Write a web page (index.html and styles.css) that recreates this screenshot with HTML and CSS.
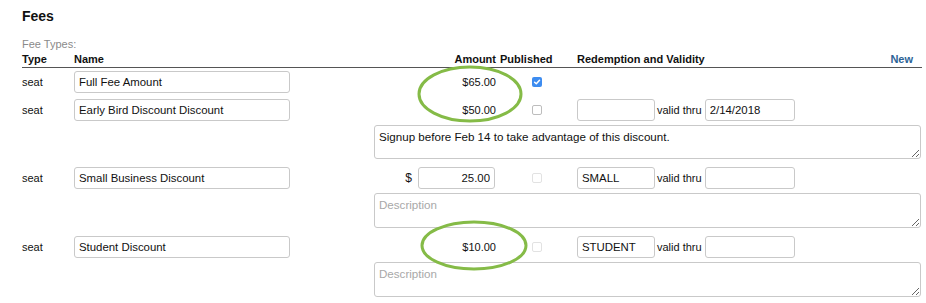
FILE: index.html
```html
<!DOCTYPE html>
<html lang="en">
<head>
    <meta charset="UTF-8">
    <title>Fees</title>
    <link rel="stylesheet" href="styles.css">
</head>
<body>
    <div class="page">
        <h1>Fees</h1>
        <div class="caption">Fee Types:</div>

        <div class="fees">
            <!-- header -->
            <div class="head">Type</div>
            <div class="head">Name</div>
            <div class="head amount">Amount</div>
            <div class="head published">Published</div>
            <div class="head redeem">Redemption and Validity <a href="#">New</a></div>

            <!-- full fee -->
            <div class="type first">seat</div>
            <div class="first"><input class="name" type="text" value="Full Fee Amount"></div>
            <div class="amount first">$65.00</div>
            <div class="publish first"><span class="check checked"><svg viewBox="0 0 10 10" width="10" height="10"><path d="M2.6 5.2 L4.3 6.8 L7.5 3.2" fill="none" stroke="#fff" stroke-width="1.5" stroke-linecap="round" stroke-linejoin="round"/></svg></span></div>
            <div class="first"></div>

            <!-- early bird -->
            <div class="type">seat</div>
            <div><input class="name" type="text" value="Early Bird Discount Discount"></div>
            <div class="amount">$50.00</div>
            <div class="publish"><span class="check"></span></div>
            <div class="redeem">
                <input class="code" type="text" value="">
                <span class="thru">valid thru</span>
                <input class="date" type="text" value="2/14/2018">
            </div>
            <textarea class="desc short" placeholder="Description">Signup before Feb 14 to take advantage of this discount.</textarea>

            <!-- small business -->
            <div class="type">seat</div>
            <div><input class="name" type="text" value="Small Business Discount"></div>
            <div class="amount"><span class="dollar">$</span><input class="price" type="text" value="25.00"></div>
            <div class="publish"><span class="check off"></span></div>
            <div class="redeem">
                <input class="code" type="text" value="SMALL">
                <span class="thru">valid thru</span>
                <input class="date" type="text" value="">
            </div>
            <textarea class="desc" placeholder="Description"></textarea>

            <!-- student -->
            <div class="type">seat</div>
            <div><input class="name" type="text" value="Student Discount"></div>
            <div class="amount">$10.00</div>
            <div class="publish"><span class="check off"></span></div>
            <div class="redeem">
                <input class="code" type="text" value="STUDENT">
                <span class="thru">valid thru</span>
                <input class="date" type="text" value="">
            </div>
            <textarea class="desc" placeholder="Description"></textarea>
        </div>
    </div>

    <!-- annotation circles drawn over the screenshot -->
    <svg class="marks" width="926" height="303" viewBox="0 0 926 303">
        <ellipse cx="470" cy="94" rx="51" ry="27" fill="none" stroke="#85bb47" stroke-width="3"/>
        <ellipse cx="474" cy="245.5" rx="52" ry="23.5" fill="none" stroke="#85bb47" stroke-width="3"/>
    </svg>
</body>
</html>
```

FILE: styles.css
```css
body, h1 {
    margin: 0;
    padding: 0;
}

body {
    font-family: 'Liberation Sans', Arial, sans-serif;
    font-size: 11px;
    color: #111;
    background-color: #ffffff;
    position: relative;
    width: 926px;
    height: 303px;
    overflow: hidden;
}

.page {
    padding: 8px 0 0 22px;
}

h1 {
    font-size: 14px;
    line-height: 16px;
    font-weight: bold;
    color: #111;
}

.caption {
    margin-top: 14px;
    line-height: 13px;
    color: #8a8a8a;
}

.fees {
    display: grid;
    grid-template-columns: 52px 300px 126px 77px 345px;
    align-items: center;
    margin-top: 2px;
}

.head {
    font-weight: bold;
    line-height: 13px;
    padding-bottom: 1px;
    border-bottom: 1px solid #555;
    align-self: stretch;
}

.head.redeem a {
    float: right;
    margin-right: 9px;
    color: #2c6396;
    text-decoration: none;
}

.amount {
    display: flex;
    justify-content: flex-end;
    align-items: center;
    padding-right: 4px;
}

.type {
    margin-top: 8px;
    line-height: 22px;
}

.type.first,
.fees > div.first {
    margin-top: 3px;
}

.fees > div:not(.head) {
    height: 22px;
    display: flex;
    align-items: center;
}

.fees > div:not(.head):not(.first):not(.type) {
    margin-top: 8px;
}

.fees > .type + div + div + div + div.first + .type,
.fees > .type + div + div + div + div.first + .type ~ div:nth-child(-n+15) {
    margin-top: 6px;
}

.fees > div.amount {
    justify-content: flex-end;
}

input {
    box-sizing: border-box;
    height: 22px;
    border: 1px solid #c9c9c9;
    border-radius: 3px;
    padding: 0 4px;
    font-family: 'Liberation Sans', Arial, sans-serif;
    font-size: 11.4px;
    color: #111;
    background-color: #fff;
    margin: 0;
}

.name {
    width: 216px;
}

.dollar {
    margin-right: 6px;
    font-size: 12px;
    color: #111;
}

.price {
    width: 77px;
    text-align: right;
    margin-right: 1px;
}

.publish {
    padding-left: 32px;
}

.check {
    display: inline-block;
    box-sizing: border-box;
    width: 10px;
    height: 10px;
    border: 1px solid #bdbdbd;
    border-radius: 2px;
    background-color: #fff;
}

.check.off {
    border-color: #e2e2e2;
}

.check.checked {
    border: none;
    background-color: #3d8cf0;
}

.check svg {
    display: block;
}

.redeem .code {
    width: 78px;
}

.thru {
    margin: 0 2px 0 2px;
}

.redeem .date {
    width: 90px;
    margin-left: 1px;
}

.desc {
    grid-column: 3 / 6;
    display: block;
    box-sizing: border-box;
    width: 547px;
    height: 35px;
    margin: 4px 0 0 0;
    border: 1px solid #c9c9c9;
    border-radius: 3px;
    padding: 4px 4px;
    font-family: 'Liberation Sans', Arial, sans-serif;
    font-size: 11.6px;
    line-height: 13px;
    color: #111;
    resize: vertical;
}

.desc.short {
    height: 34px;
}

.desc::placeholder {
    color: #a8a8a8;
}

.marks {
    position: absolute;
    left: 0;
    top: 0;
    pointer-events: none;
}
```
